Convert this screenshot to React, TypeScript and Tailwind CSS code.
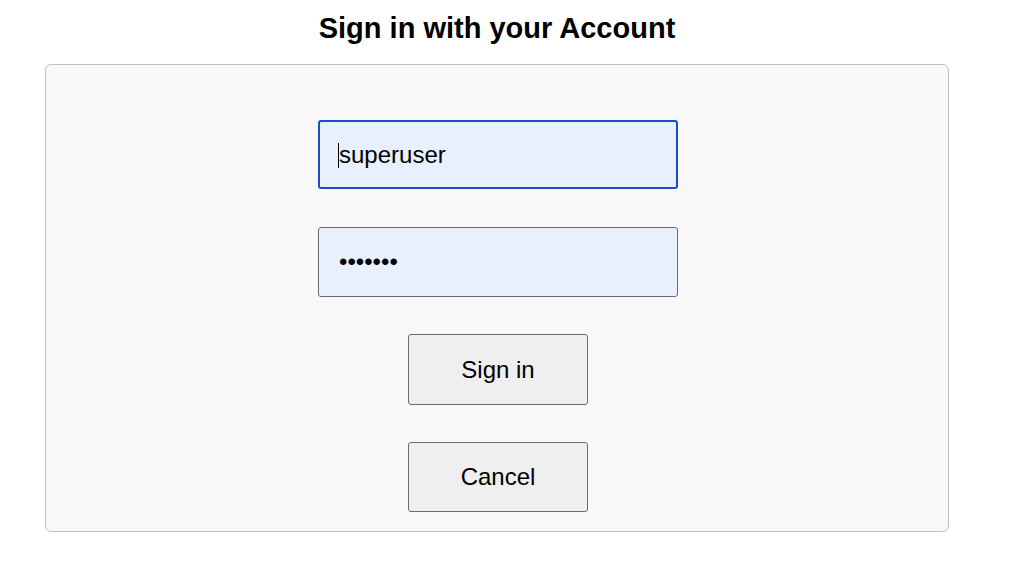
import React from 'react';

const font = { fontFamily: '"Liberation Sans", Arial, sans-serif' };

export default function App() {
  return (
    <div className="min-h-[576px] w-[1032px] bg-white text-black" style={font}>
      <div className="w-[904px] ml-[45px]">
        <h1 className="h-[64px] flex items-center justify-center text-[29px] font-bold leading-none pb-[8px]">
          Sign in with your Account
        </h1>
        <div className="h-[468px] rounded-[6px] border border-[#c0c0c0] bg-[#f8f8f8] flex flex-col items-center pt-[55px] pl-[2px]">
          <div className="relative">
            <input
              readOnly
              value="superuser"
              className="w-[360px] h-[69px] rounded-[3px] border-2 border-[#1a4fcc] bg-[#e8f0fe] pl-[19px] text-[24px] text-black outline-none"
            />
            <span className="absolute left-[20px] top-[23px] h-[25px] w-px bg-black" />
          </div>
          <input
            readOnly
            type="password"
            value="1234567"
            className="mt-[38px] w-[360px] h-[70px] rounded-[3px] border border-[#6b6b6b] bg-[#e8f0fe] pl-[20px] text-[24px] text-black outline-none"
          />
          <button className="mt-[37px] w-[180px] h-[71px] rounded-[3px] border border-[#6b6b6b] bg-[#efefef] text-[24px] text-black">
            Sign in
          </button>
          <button className="mt-[37px] w-[180px] h-[70px] rounded-[3px] border border-[#6b6b6b] bg-[#efefef] text-[24px] text-black">
            Cancel
          </button>
        </div>
      </div>
    </div>
  );
}
